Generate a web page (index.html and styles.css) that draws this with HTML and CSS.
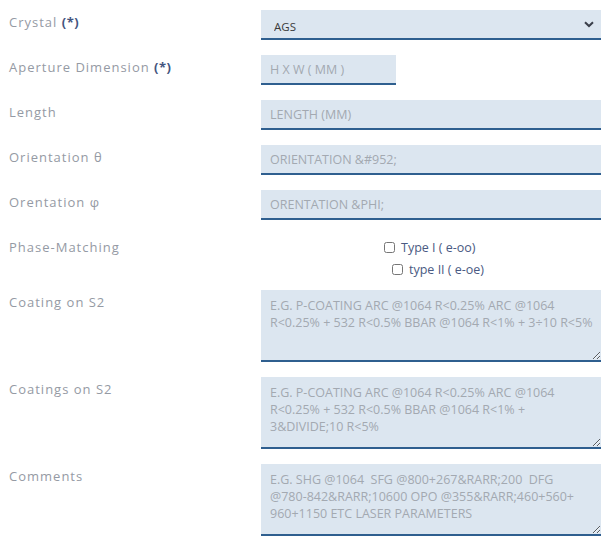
FILE: index.html
```html
<!DOCTYPE html>
<html>
<head>
<meta charset="utf-8">
<link rel="stylesheet" href="styles.css">
</head>
<body>
<form class="form">
  <div class="row">
    <label class="lbl">Crystal <b class="req">(*)</b></label>
    <div class="field select-wrap">
      <select class="ctl select"><option>AGS</option></select>
      <svg class="chev" width="10" height="7" viewBox="0 0 10 7"><path d="M1 1.2 L5 5 L9 1.2" fill="none" stroke="#3a3f4a" stroke-width="2"/></svg>
    </div>
  </div>
  <div class="row">
    <label class="lbl">Aperture Dimension <b class="req">(*)</b></label>
    <div class="field"><input class="ctl short" placeholder="H X W ( MM )"></div>
  </div>
  <div class="row">
    <label class="lbl">Length</label>
    <div class="field"><input class="ctl" placeholder="LENGTH (MM)"></div>
  </div>
  <div class="row">
    <label class="lbl">Orientation θ</label>
    <div class="field"><input class="ctl" placeholder="ORIENTATION &amp;#952;"></div>
  </div>
  <div class="row">
    <label class="lbl">Orentation φ</label>
    <div class="field"><input class="ctl" placeholder="ORENTATION &amp;PHI;"></div>
  </div>
  <div class="row row-check">
    <label class="lbl">Phase-Matching</label>
    <div class="field checks">
      <label class="chk chk1"><input type="checkbox"><span>Type I ( e-oo)</span></label>
      <label class="chk chk2"><input type="checkbox"><span>type II ( e-oe)</span></label>
    </div>
  </div>
  <div class="row">
    <label class="lbl">Coating on S2</label>
    <div class="field"><textarea class="ctl area" placeholder="E.G. P-COATING ARC @1064 R&lt;0.25% ARC @1064&#10;R&lt;0.25% + 532 R&lt;0.5% BBAR @1064 R&lt;1% + 3÷10 R&lt;5%"></textarea></div>
  </div>
  <div class="row">
    <label class="lbl">Coatings on S2</label>
    <div class="field"><textarea class="ctl area" placeholder="E.G. P-COATING ARC @1064 R&lt;0.25% ARC @1064&#10;R&lt;0.25% + 532 R&lt;0.5% BBAR @1064 R&lt;1% +&#10;3&amp;DIVIDE;10 R&lt;5%"></textarea></div>
  </div>
  <div class="row">
    <label class="lbl">Comments</label>
    <div class="field"><textarea class="ctl area" placeholder="E.G. SHG @1064  SFG @800+267&amp;RARR;200  DFG&#10;@780-842&amp;RARR;10600 OPO @355&amp;RARR;460+560+&#10;960+1150 ETC LASER PARAMETERS"></textarea></div>
  </div>
</form>
</body>
</html>
```

FILE: styles.css
```css
html, body {
  margin: 0;
  padding: 0;
  background: #ffffff;
}
body {
  font-family: "Open Sans", "Liberation Sans", sans-serif;
}
.form {
  padding: 10px 0 0 9px;
}
.row {
  display: grid;
  grid-template-columns: 252px 340px;
  margin-bottom: 15px;
}
.lbl {
  font-size: 13px;
  line-height: 18px;
  letter-spacing: 1px;
  color: #959aa4;
  padding-top: 3px;
}
.req {
  color: #44557e;
  font-weight: 700;
  letter-spacing: 0.5px;
}
.field {
  position: relative;
}
.ctl {
  display: block;
  box-sizing: border-box;
  width: 340px;
  height: 30px;
  margin: 0;
  border: none;
  border-bottom: 2px solid #2f5f8f;
  border-radius: 0;
  background: #dce6f0;
  font-family: "Open Sans", "Liberation Sans", sans-serif;
  font-size: 12.5px;
  color: #444;
  padding: 0 9px;
  outline: none;
}
.ctl::placeholder {
  color: #a3a9b1;
  text-transform: uppercase;
  opacity: 1;
}
.short {
  width: 135px;
}
.select {
  appearance: none;
  -webkit-appearance: none;
  font-size: 11.5px;
  color: #3a3a3a;
  padding: 5px 13px 0;
}
.chev {
  position: absolute;
  right: 7px;
  top: 11px;
}
.area {
  height: 72px;
  padding: 7px 2px 7px 9px;
  line-height: 17px;
  resize: vertical;
}
.row-check {
  margin-bottom: 10px;
}
.checks {
  display: flex;
  flex-direction: column;
  padding-top: 1px;
}
.chk {
  display: flex;
  align-items: center;
  height: 22px;
  font-size: 12.5px;
  color: #4a5a82;
}
.chk input {
  width: 11px;
  height: 11px;
  margin: 0 6px 0 0;
}
.chk1 {
  padding-left: 123px;
}
.chk2 {
  padding-left: 131px;
}
```
